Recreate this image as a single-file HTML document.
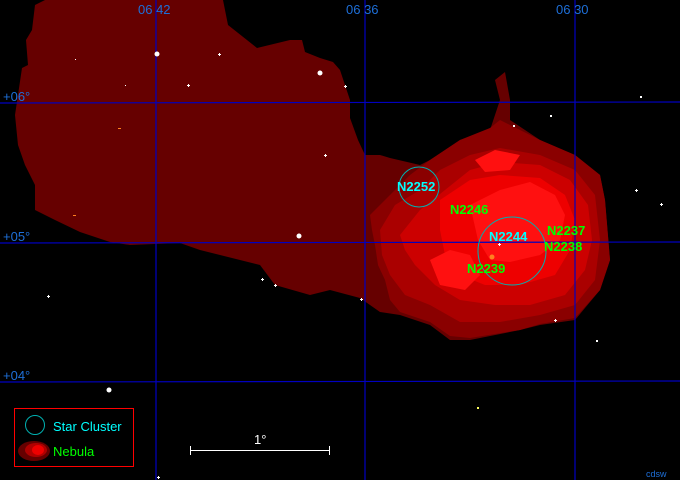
<!DOCTYPE html>
<html><head><meta charset="utf-8"><style>
html,body{margin:0;padding:0;background:#000;width:680px;height:480px;overflow:hidden}
svg{display:block}
text{font-family:"Liberation Sans",sans-serif}
</style></head><body>
<svg width="680" height="480" viewBox="0 0 680 480">
<rect width="680" height="480" fill="#000"/>
<!-- dark nebula -->
<polygon fill="#660000" points="45,0 223,0 228,25 257,48 290,40 302,40 305,52 320,58 333,62 340,70 350,100 350,118 358,140 365,155 380,155 390,158 420,165 430,160 460,140 490,130 500,100 495,80 505,72 510,100 510,120 540,140 575,155 600,175 605,200 610,260 600,290 575,320 540,325 520,330 470,340 450,340 430,325 400,315 380,312 360,298 330,290 310,295 275,285 260,265 200,250 180,243 130,245 110,242 80,232 55,220 35,210 35,185 25,165 18,145 15,115 22,68 28,65 26,40 32,30 35,5"/>
<polygon fill="#8a0000" points="370,215 380,205 395,190 410,175 430,160 460,140 490,128 500,120 510,125 540,140 575,155 600,175 605,200 610,260 600,290 575,318 540,324 520,330 470,338 450,336 430,322 400,312 390,300 385,280 378,265 375,245 372,230"/>
<polygon fill="#aa0000" points="380,230 395,205 420,190 440,170 470,155 500,148 540,155 575,170 595,195 600,240 595,280 575,305 540,315 500,322 460,322 430,305 405,295 390,275 382,255"/>
<polygon fill="#cc0000" points="400,235 420,210 445,190 470,170 500,162 540,165 570,180 588,205 592,240 585,270 565,295 530,305 495,305 460,300 435,285 415,265 405,250"/>
<polygon fill="#ee0000" points="440,200 470,180 500,175 540,178 565,195 575,220 570,250 555,275 520,285 485,285 460,275 445,255 440,230"/>
<polygon fill="#ff1010" points="470,205 500,190 530,182 555,195 565,215 560,240 540,255 510,262 490,260 478,240"/>
<polygon fill="#ff1010" points="430,260 450,250 470,255 480,275 465,290 440,285"/>
<polygon fill="#ff1010" points="475,160 495,150 520,155 510,170 485,172"/>
<!-- grid -->
<g stroke="#0000c0" stroke-width="1.2" fill="none">
<line x1="156" y1="0" x2="156" y2="480"/>
<line x1="365" y1="0" x2="365" y2="480"/>
<line x1="575" y1="0" x2="575" y2="480"/>
<line x1="0" y1="103" x2="680" y2="102"/>
<line x1="0" y1="243" x2="680" y2="242"/>
<line x1="0" y1="382" x2="680" y2="381"/>
</g>
<g fill="#1e6fd8" font-size="13">
<text x="138" y="14">06 42</text><text x="346" y="14">06 36</text><text x="556" y="14">06 30</text>
<text x="3" y="101">+06°</text><text x="3" y="241">+05°</text><text x="3" y="380">+04°</text>
</g>
<!-- stars -->
<g fill="#fff">
<circle cx="157" cy="54" r="2.5"/><circle cx="320" cy="73" r="2.5"/><circle cx="299" cy="236" r="2.5"/><circle cx="109" cy="390" r="2.5"/>
<rect x="187" y="85" width="3" height="1"/><rect x="188" y="84" width="1" height="3"/>
<rect x="218" y="54" width="3" height="1"/><rect x="219" y="53" width="1" height="3"/>
<rect x="324" y="155" width="3" height="1"/><rect x="325" y="154" width="1" height="3"/>
<rect x="344" y="86" width="3" height="1"/><rect x="345" y="85" width="1" height="3"/>
<rect x="47" y="296" width="3" height="1"/><rect x="48" y="295" width="1" height="3"/>
<rect x="261" y="279" width="3" height="1"/><rect x="262" y="278" width="1" height="3"/>
<rect x="274" y="285" width="3" height="1"/><rect x="275" y="284" width="1" height="3"/>
<rect x="360" y="299" width="3" height="1"/><rect x="361" y="298" width="1" height="3"/>
<rect x="554" y="320" width="3" height="1"/><rect x="555" y="319" width="1" height="3"/>
<rect x="635" y="190" width="3" height="1"/><rect x="636" y="189" width="1" height="3"/>
<rect x="660" y="204" width="3" height="1"/><rect x="661" y="203" width="1" height="3"/>
<rect x="513" y="125" width="2" height="2"/><rect x="550" y="115" width="2" height="2"/>
<rect x="75" y="59" width="1" height="1"/><rect x="125" y="85" width="1" height="1"/>
<rect x="596" y="340" width="2" height="2"/><rect x="640" y="96" width="2" height="2"/>
<rect x="157" y="477" width="3" height="1"/><rect x="158" y="476" width="1" height="3"/>
<rect x="498" y="244" width="3" height="1"/><rect x="499" y="243" width="1" height="3"/>
</g>
<circle cx="492" cy="257" r="2.5" fill="#ff8020"/>
<rect x="118" y="128" width="3" height="1" fill="#ff8020"/><rect x="73" y="215" width="3" height="1" fill="#ff8020"/>
<rect x="477" y="407" width="2" height="2" fill="#ffff60"/>
<!-- clusters -->
<circle cx="419" cy="187" r="20" fill="none" stroke="#00b0b0" stroke-width="1"/>
<circle cx="512" cy="251" r="34" fill="none" stroke="#00b0b0" stroke-width="1"/>
<g font-size="13" font-weight="bold">
<text x="397" y="191" fill="#00ffff">N2252</text>
<text x="489" y="241" fill="#00ffff">N2244</text>
<text x="450" y="214" fill="#00ff00">N2246</text>
<text x="547" y="235" fill="#00ff00">N2237</text>
<text x="544" y="251" fill="#00ff00">N2238</text>
<text x="467" y="273" fill="#00ff00">N2239</text>
</g>
<!-- legend -->
<rect x="14.5" y="408.5" width="119" height="58" fill="#000" stroke="#ff0000" stroke-width="1"/>
<circle cx="35" cy="425" r="9.5" fill="none" stroke="#00b0b0" stroke-width="1"/>
<text x="53" y="431" fill="#00ffff" font-size="13">Star Cluster</text>
<ellipse cx="34" cy="451" rx="16" ry="10" fill="#660000"/>
<ellipse cx="36" cy="450" rx="11" ry="7" fill="#b00000"/>
<ellipse cx="38" cy="450" rx="6" ry="5" fill="#ee0000"/>
<text x="53" y="456" fill="#00ff00" font-size="13">Nebula</text>
<!-- scale -->
<g stroke="#fff" stroke-width="1"><line x1="190" y1="450.5" x2="330" y2="450.5"/><line x1="190.5" y1="446" x2="190.5" y2="455"/><line x1="329.5" y1="446" x2="329.5" y2="455"/></g>
<text x="254" y="444" fill="#fff" font-size="13">1°</text>
<text x="646" y="477" fill="#1e6fd8" font-size="9">cdsw</text>
</svg>
</body></html>
